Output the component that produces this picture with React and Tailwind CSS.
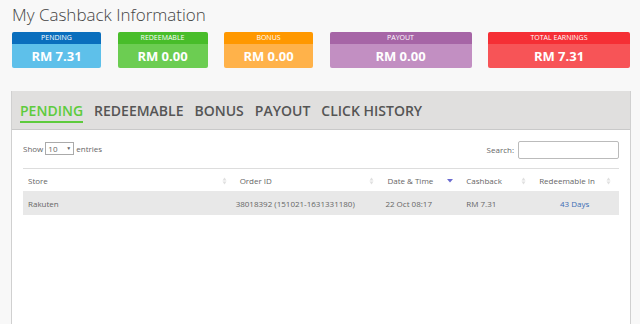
const cards = [
  { label: "PENDING", value: "RM 7.31", w: "w-[89px]", head: "bg-[#0a6ebd]", body: "bg-[#5ec0ea]" },
  { label: "REDEEMABLE", value: "RM 0.00", w: "w-[90px]", head: "bg-[#48bd2a]", body: "bg-[#6ccd52]" },
  { label: "BONUS", value: "RM 0.00", w: "w-[89px]", head: "bg-[#ff9800]", body: "bg-[#ffb24a]" },
  { label: "PAYOUT", value: "RM 0.00", w: "w-[142px]", head: "bg-[#a665a6]", body: "bg-[#c28fc2]" },
  { label: "TOTAL EARNINGS", value: "RM 7.31", w: "w-[142px]", head: "bg-[#f52f35]", body: "bg-[#f75457]" },
]

const tabs = ["PENDING", "REDEEMABLE", "BONUS", "PAYOUT", "CLICK HISTORY"]

const cols = [
  { name: "Store", w: "w-[212px]" },
  { name: "Order ID", w: "w-[148px]" },
  { name: "Date & Time", w: "w-[79px]", active: true },
  { name: "Cashback", w: "w-[73px]" },
  { name: "Redeemable In", w: "w-[85px]" },
]

function SortIcon({ active }) {
  if (active) {
    return (
      <svg width="6" height="5" viewBox="0 0 6 5" className="shrink-0">
        <path d="M0 1h6L3 4.5z" fill="#6b6bd0" />
      </svg>
    )
  }
  return (
    <svg width="5" height="8" viewBox="0 0 5 8" className="shrink-0">
      <path d="M2.5 0.5L4.5 3.5H0.5z" fill="#e0e0e0" />
      <path d="M2.5 7.5L4.5 4.5H0.5z" fill="#e0e0e0" />
    </svg>
  )
}

export default function App() {
  return (
    <div className="w-[640px] h-[324px] overflow-hidden bg-[#f8f8f8] font-['Open_Sans',sans-serif] pl-[11px] pr-[9px]">
      <h1 className="text-[17px] font-light leading-none text-[#444] pl-px pt-[6px]">My Cashback Information</h1>

      <div className="flex justify-between mt-[9px] pl-px pr-px">
        {cards.map((c) => (
          <div key={c.label} className={`${c.w} h-[36px] rounded-[2px] overflow-hidden text-white flex flex-col`}>
            <div className={`${c.head} h-[12px] text-[7px] leading-[12px] text-center`}>{c.label}</div>
            <div className={`${c.body} flex-1 text-[13px] font-bold leading-[24px] text-center`}>{c.value}</div>
          </div>
        ))}
      </div>

      <div className="mt-[23px] border-x border-[#d0d0d0] bg-white h-[240px]">
        <div className="bg-[#e0dfde] h-[39px] border-b border-[#c9c9c9] flex items-start gap-[11px] pl-[8px] pt-[11px]">
          {tabs.map((t, i) => (
            <div
              key={t}
              className={`text-[14px] font-semibold leading-[17px] pb-[2px] ${i === 0 ? "text-[#5dcb3c] border-b-2 border-[#5dcb3c]" : "text-[#555]"}`}
            >
              {t}
            </div>
          ))}
        </div>

        <div className="px-[11px]">
          <div className="flex justify-between items-start pt-[11px] h-[38px]">
            <div className="flex items-center gap-[2px] text-[8px] text-[#666] mt-px">
              <span>Show</span>
              <div className="w-[29px] h-[13px] border border-[#aaa] flex items-center justify-between px-[2px]">
                <span>10</span>
                <span className="text-[5px]">▼</span>
              </div>
              <span>entries</span>
            </div>
            <div className="flex items-center gap-[4px] text-[8px] text-[#666]">
              <span>Search:</span>
              <div className="w-[101px] h-[18px] border border-[#bbb] rounded-[2px] bg-white"></div>
            </div>
          </div>

          <div className="border-t border-[#ddd] text-[8px]">
            <div className="flex h-[22px] items-center text-[#666] pt-px">
              {cols.map((c) => (
                <div key={c.name} className={`${c.w} flex items-center justify-between pl-[5px] pr-[8px]`}>
                  <span>{c.name}</span>
                  <SortIcon active={c.active} />
                </div>
              ))}
            </div>
            <div className="flex h-[24px] items-center bg-[#e8e8e8] text-[#666] pt-px">
              <div className="w-[212px] pl-[5px]">Rakuten</div>
              <div className="w-[148px] pl-px">38018392 (151021-1631331180)</div>
              <div className="w-[79px] pl-[3px]">22 Oct 08:17</div>
              <div className="w-[73px] pl-[5px]">RM 7.31</div>
              <div className="w-[85px] text-center text-[#3b6db5] pr-[4px]">43 Days</div>
            </div>
          </div>
        </div>
      </div>
    </div>
  )
}
